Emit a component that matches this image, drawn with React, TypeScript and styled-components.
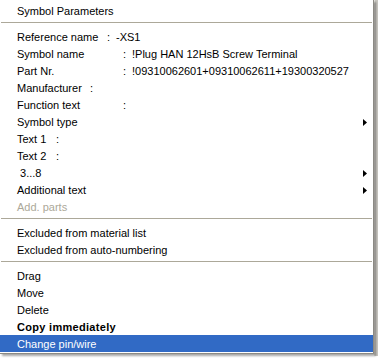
import React from "react";
import styled, { createGlobalStyle } from "styled-components";

const GlobalStyle = createGlobalStyle`
  html, body {
    margin: 0;
    padding: 0;
    background: #ffffff;
  }
  body {
    font-family: "Liberation Sans", Arial, sans-serif;
    font-size: 11px;
    color: #000;
  }
`;

type Item =
  | { kind: "sep" }
  | {
      kind: "row";
      text: string;
      colonX?: number;
      value?: string;
      sub?: boolean;
      disabled?: boolean;
      bold?: boolean;
      active?: boolean;
    };

const items: Item[] = [
  { kind: "row", text: "Symbol Parameters" },
  { kind: "sep" },
  { kind: "row", text: "Reference name", colonX: 108, value: "-XS1" },
  { kind: "row", text: "Symbol name", colonX: 124, value: "!Plug HAN 12HsB Screw Terminal" },
  { kind: "row", text: "Part Nr.", colonX: 124, value: "!09310062601+09310062611+19300320527" },
  { kind: "row", text: "Manufacturer", colonX: 91, value: "" },
  { kind: "row", text: "Function text", colonX: 124, value: "" },
  { kind: "row", text: "Symbol type", sub: true },
  { kind: "row", text: "Text 1", colonX: 57, value: "" },
  { kind: "row", text: "Text 2", colonX: 57, value: "" },
  { kind: "row", text: " 3...8", sub: true },
  { kind: "row", text: "Additional text", sub: true },
  { kind: "row", text: "Add. parts", disabled: true },
  { kind: "sep" },
  { kind: "row", text: "Excluded from material list" },
  { kind: "row", text: "Excluded from auto-numbering" },
  { kind: "sep" },
  { kind: "row", text: "Drag" },
  { kind: "row", text: "Move" },
  { kind: "row", text: "Delete" },
  { kind: "row", text: "Copy immediately", bold: true },
  { kind: "row", text: "Change pin/wire", active: true },
];

const Arrow = () => (
  <svg width="4" height="7" viewBox="0 0 4 7">
    <polygon points="0,0 4,3.5 0,7" fill="currentColor" />
  </svg>
);

export default function App() {
  return (
    <>
      <GlobalStyle />
      <Page>
        <Menu>
          {items.map((it, i) =>
            it.kind === "sep" ? (
              <Separator key={i} />
            ) : (
              <Row
                key={i}
                $disabled={it.disabled}
                $bold={it.bold}
                $active={it.active}
              >
                <Label>
                  {it.colonX !== undefined ? (
                    <>
                      <Key $w={it.colonX - 18}>{it.text}</Key>
                      <Colon>:</Colon>
                      {it.value}
                    </>
                  ) : (
                    it.text
                  )}
                </Label>
                {it.sub && <Arrow />}
              </Row>
            )
          )}
        </Menu>
        <Backdrop />
      </Page>
    </>
  );
}

const Page = styled.div`
  width: 378px;
  height: 359px;
  display: flex;
  align-items: flex-start;
  overflow: hidden;
  background: #ffffff;
`;

const Menu = styled.div`
  position: relative;
  z-index: 1;
  width: 373px;
  flex: none;
  padding: 2px 0 1px;
  background: #ffffff;
  border-right: 1px solid #8c8a84;
  border-bottom: 1px solid #8c8a84;
  box-shadow: 2px 2px 2px rgba(0, 0, 0, 0.35);
`;

const Backdrop = styled.div`
  flex: 1;
  align-self: stretch;
  height: 356px;
  background: #c8c6c0;
  border-left: 1px solid #e4e2dc;
`;

const Row = styled.div<{ $disabled?: boolean; $bold?: boolean; $active?: boolean }>`
  height: 17px;
  display: flex;
  align-items: center;
  justify-content: space-between;
  padding: 1px 6px 0 17px;
  box-sizing: border-box;
  white-space: pre;
  font-weight: ${(p) => (p.$bold ? 700 : 400)};
  letter-spacing: ${(p) => (p.$bold ? "0.3px" : "0")};
  color: ${(p) => (p.$active ? "#ffffff" : p.$disabled ? "#aca899" : "#000000")};
  background: ${(p) => (p.$active ? "#316ac5" : "transparent")};
`;

const Label = styled.span`
  line-height: 16px;
`;

const Key = styled.span<{ $w: number }>`
  display: inline-block;
  width: ${(p) => p.$w}px;
`;

const Colon = styled.span`
  display: inline-block;
  width: 9px;
`;

const Separator = styled.div`
  height: 1px;
  margin: 3px 1px 5px 1px;
  background: #aca899;
`;
